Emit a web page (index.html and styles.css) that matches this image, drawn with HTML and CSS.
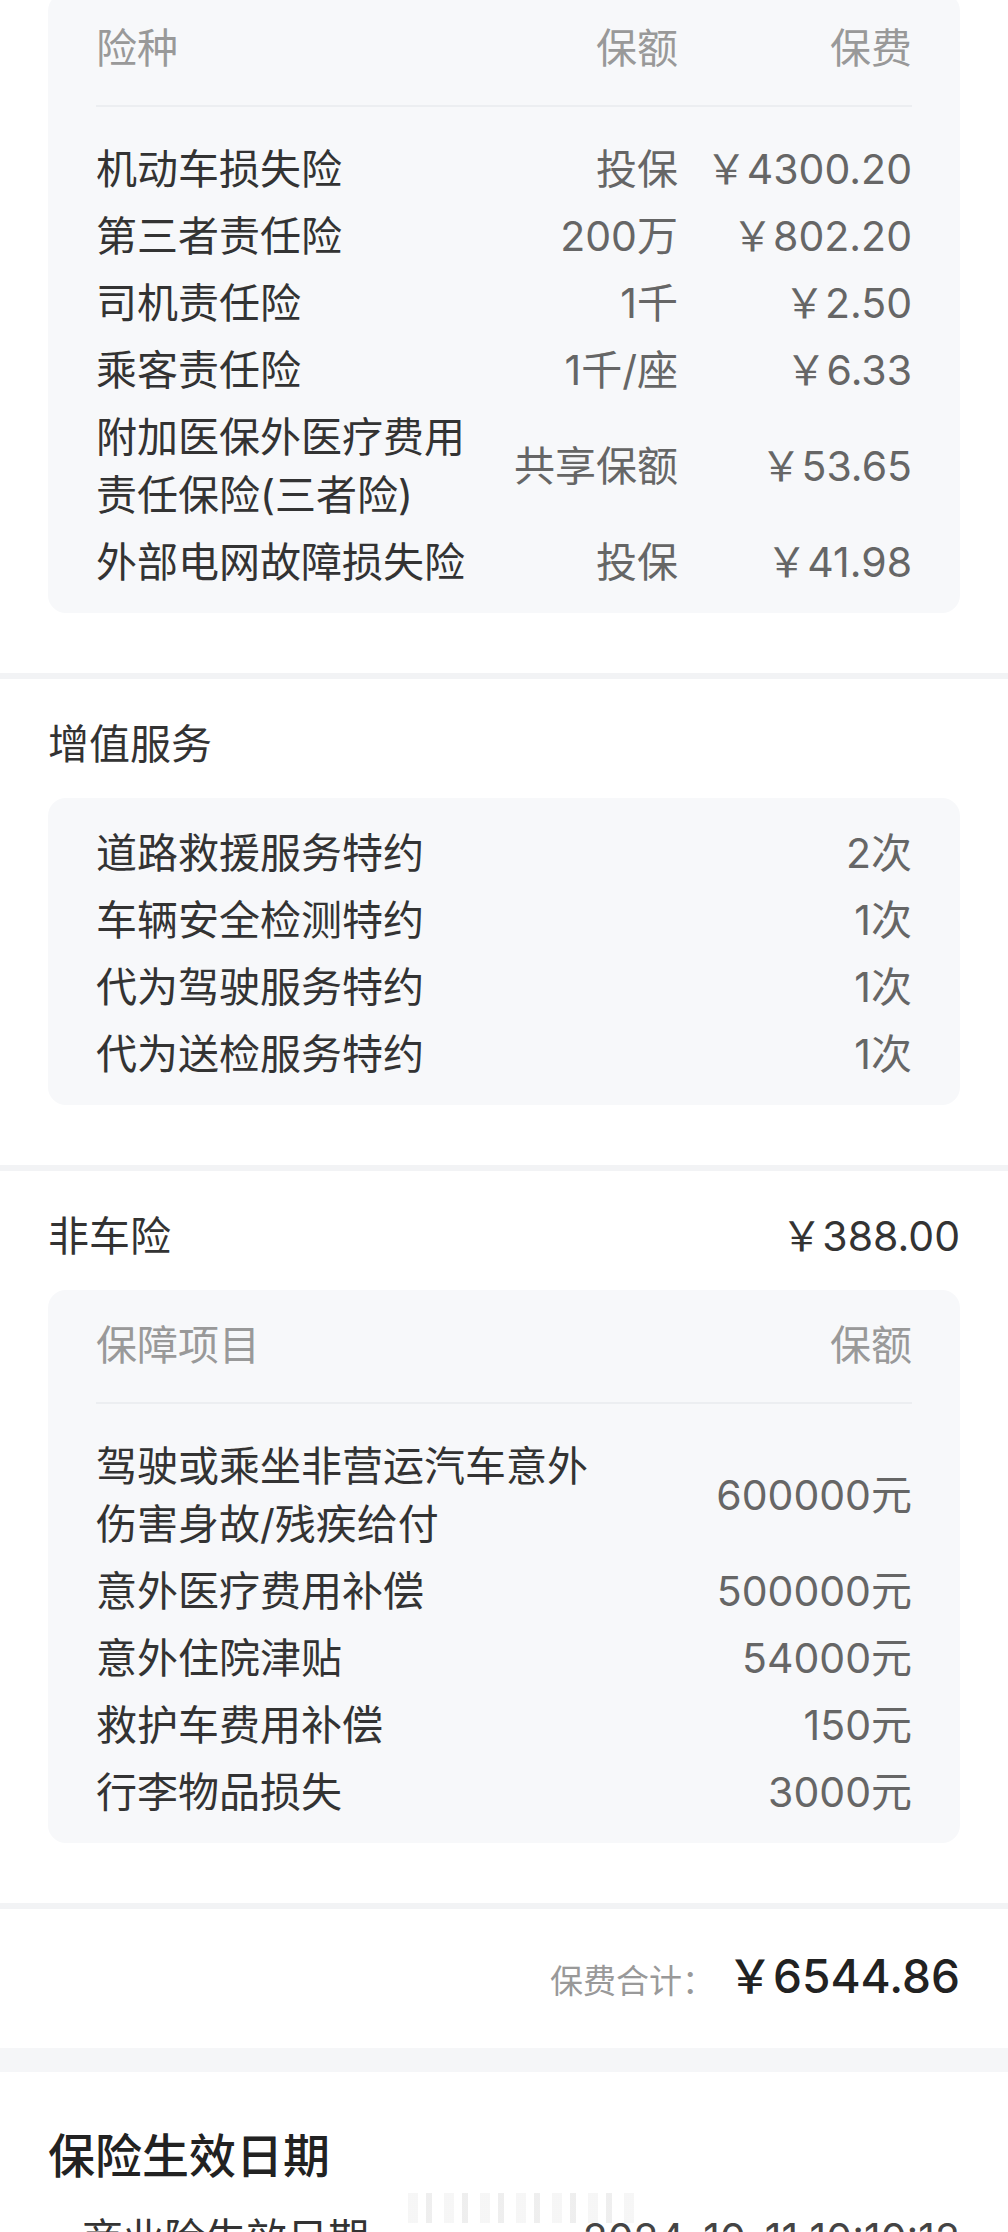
FILE: index.html
```html
<!DOCTYPE html>
<html lang="zh-CN">
<head>
<meta charset="utf-8">
<title>保单详情</title>
<link rel="stylesheet" href="styles.css">
</head>
<body>
<div class="page">
  <section class="section section-first">
    <div class="card">
      <div class="grid3 head">
        <span>险种</span><span class="r">保额</span><span class="r">保费</span>
      </div>
      <div class="rule"></div>
      <div class="grid3">
        <span class="name">机动车损失险</span><span class="val">投保</span><span class="val">￥4300.20</span>
        <span class="name">第三者责任险</span><span class="val">200万</span><span class="val">￥802.20</span>
        <span class="name">司机责任险</span><span class="val">1千</span><span class="val">￥2.50</span>
        <span class="name">乘客责任险</span><span class="val">1千/座</span><span class="val">￥6.33</span>
        <span class="name">附加医保外医疗费用责任保险(三者险)</span><span class="val">共享保额</span><span class="val">￥53.65</span>
        <span class="name">外部电网故障损失险</span><span class="val">投保</span><span class="val">￥41.98</span>
      </div>
    </div>
  </section>
  <div class="band"></div>
  <section class="section">
    <div class="sec-title"><span>增值服务</span></div>
    <div class="card">
      <div class="grid2">
        <span class="name">道路救援服务特约</span><span class="val">2次</span>
        <span class="name">车辆安全检测特约</span><span class="val">1次</span>
        <span class="name">代为驾驶服务特约</span><span class="val">1次</span>
        <span class="name">代为送检服务特约</span><span class="val">1次</span>
      </div>
    </div>
  </section>
  <div class="band"></div>
  <section class="section">
    <div class="sec-title"><span>非车险</span><span>￥388.00</span></div>
    <div class="card">
      <div class="grid2 head">
        <span>保障项目</span><span class="r">保额</span>
      </div>
      <div class="rule"></div>
      <div class="grid2">
        <span class="name">驾驶或乘坐非营运汽车意外伤害身故/残疾给付</span><span class="val">600000元</span>
        <span class="name">意外医疗费用补偿</span><span class="val">500000元</span>
        <span class="name">意外住院津贴</span><span class="val">54000元</span>
        <span class="name">救护车费用补偿</span><span class="val">150元</span>
        <span class="name">行李物品损失</span><span class="val">3000元</span>
      </div>
    </div>
  </section>
  <div class="band"></div>
  <div class="total">
    <span class="total-label">保费合计：</span><span class="total-amount">￥6544.86</span>
  </div>
  <div class="band band-thick"></div>
  <section class="date-section">
    <h2 class="date-title">保险生效日期</h2>
    <div class="date-row">
      <span class="date-label">商业险生效日期</span>
      <span class="redact"></span>
      <span class="date-value">2024-10-11 10:10:12</span>
    </div>
  </section>
</div>
</body>
</html>
```

FILE: styles.css
```css
* {
  box-sizing: border-box;
  margin: 0;
  padding: 0;
}

html,
body {
  background: #ffffff;
}

body {
  width: 1008px;
  height: 2232px;
  overflow: hidden;
  font-family: Inter, "Noto Sans CJK SC", sans-serif;
  font-size: 41px;
  line-height: 58px;
  color: #333333;
}

.page {
  display: flex;
  flex-direction: column;
}

.section {
  padding: 36px 48px 60px;
}

.section-first {
  padding-top: 0;
  margin-top: -7px;
}

.band {
  height: 6px;
  background: #f2f3f5;
}

.band-thick {
  height: 24px;
  background: #f5f6f8;
}

.sec-title {
  display: flex;
  justify-content: space-between;
  margin-bottom: 25px;
  color: #333333;
}

.card {
  background: #f7f8fa;
  border-radius: 18px;
  padding: 26px 48px 22px;
}

.grid3 {
  display: grid;
  grid-template-columns: minmax(0, 1fr) auto 212px;
  column-gap: 22px;
  row-gap: 9px;
  align-items: center;
}

.grid2 {
  display: grid;
  grid-template-columns: 510px 1fr;
  row-gap: 9px;
  align-items: center;
}

.head {
  color: #999999;
}

.name {
  color: #333333;
}

.r,
.val {
  text-align: right;
}

.val {
  color: #666666;
  white-space: nowrap;
}

.rule {
  height: 2px;
  background: #eceef1;
  margin: 28px 0 33px;
}

.total {
  display: flex;
  justify-content: flex-end;
  align-items: baseline;
  padding: 35px 48px;
  line-height: 64px;
}

.total-label {
  font-size: 33px;
  color: #999999;
}

.total-amount {
  margin-left: 12px;
  font-size: 46px;
  font-weight: 500;
  color: #222222;
}

.date-section {
  padding: 52px 48px 0;
}

.date-title {
  font-size: 47px;
  line-height: 64px;
  font-weight: 500;
  color: #222222;
}

.date-row {
  position: relative;
  display: flex;
  justify-content: space-between;
  align-items: baseline;
  margin-top: 21px;
  padding-left: 34px;
}

.date-label {
  color: #333333;
}

.date-value {
  color: #444444;
}

.redact {
  position: absolute;
  left: 360px;
  top: -16px;
  width: 226px;
  height: 30px;
  opacity: 0.35;
  background: repeating-linear-gradient(90deg, #e6e6e6 0 10px, #ffffff 10px 18px, #d0d0d0 18px 24px, #ffffff 24px 36px);
}
```
